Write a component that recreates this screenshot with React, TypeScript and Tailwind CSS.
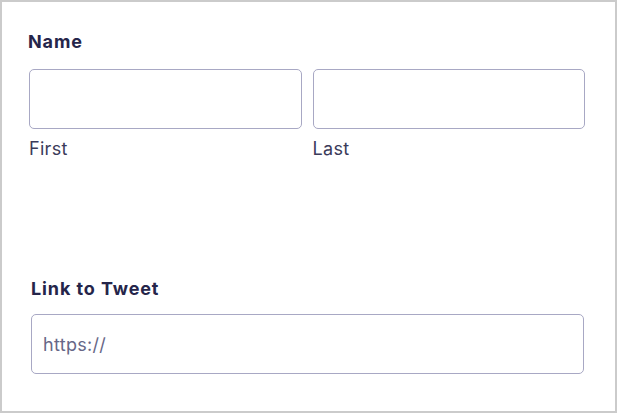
export default function App() {
  return (
    <div className="w-[617px] h-[413px] border-2 border-[#cbcbcb] bg-white font-['Inter',sans-serif] text-[#25254a]">
      <div className="pt-[27px] pl-[26px] pr-[30px]">
        <div className="text-[18px] font-bold leading-[25px] tracking-[0.9px]">Name</div>
        <div className="mt-[15px] ml-[1px] grid grid-cols-2 gap-[11px]">
          <div>
            <input className="block w-full h-[60px] rounded-[5px] border border-[#a8a8c4] bg-white outline-none" />
            <div className="mt-[7px] text-[18px] leading-[25px] tracking-[0.3px] text-[#3b3b5a]">First</div>
          </div>
          <div>
            <input className="block w-full h-[60px] rounded-[5px] border border-[#a8a8c4] bg-white outline-none" />
            <div className="mt-[7px] text-[18px] leading-[25px] tracking-[0.3px] text-[#3b3b5a]">Last</div>
          </div>
        </div>
      </div>
      <div className="mt-[115px] pl-[29px] pr-[31px]">
        <div className="text-[18px] font-bold leading-[25px] tracking-[0.9px]">Link to Tweet</div>
        <input
          placeholder="https://"
          className="mt-[13px] block w-full h-[60px] rounded-[5px] border border-[#a8a8c4] bg-white px-[11px] text-[18px] tracking-[0.3px] text-[#3b3b5a] placeholder:text-[#676787] outline-none"
        />
      </div>
    </div>
  );
}
